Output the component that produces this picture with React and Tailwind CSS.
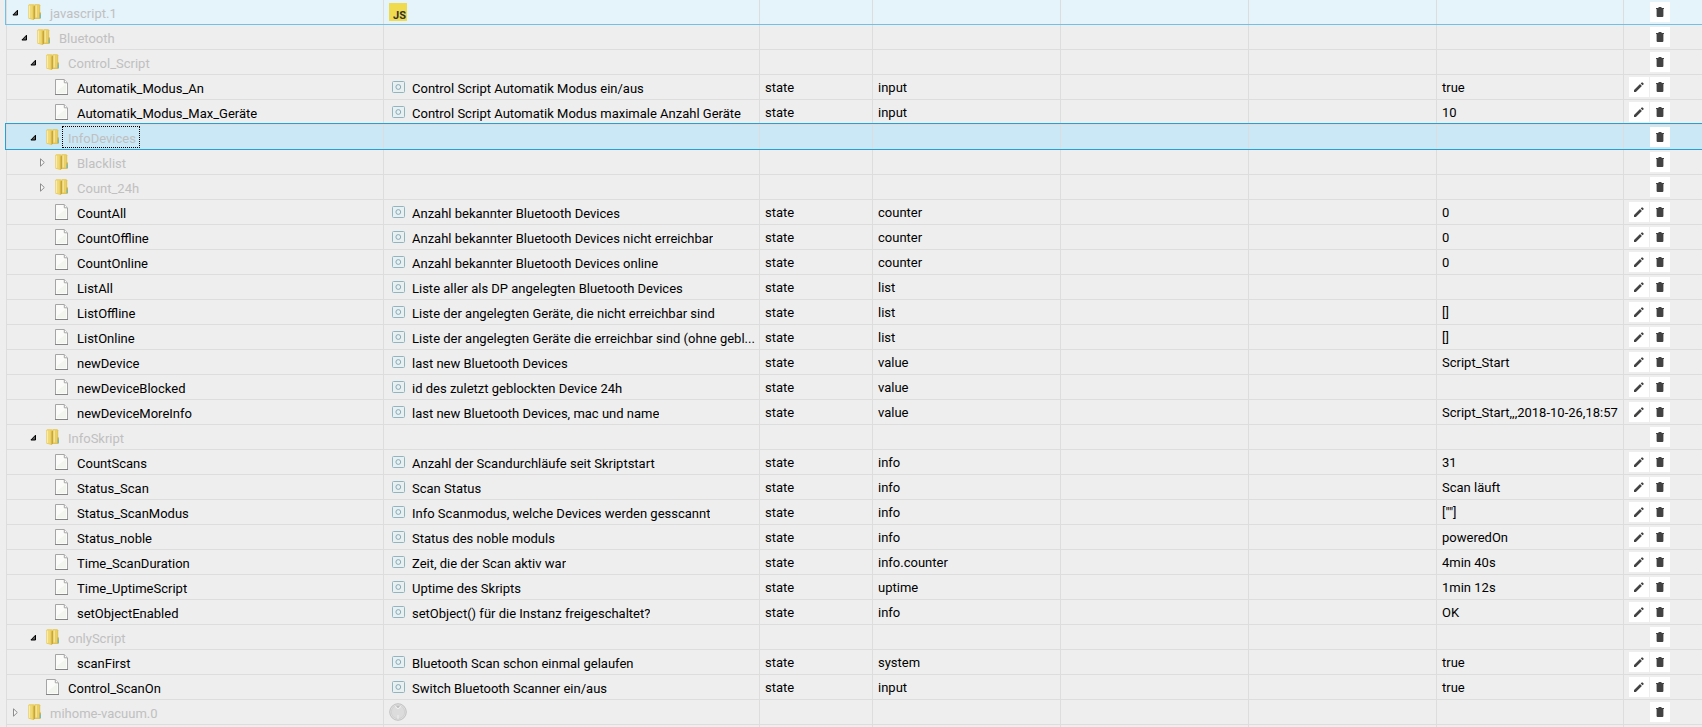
const LINE = 'border-[#dddddd]'

const indents = ['pl-[5px]', 'pl-[14px]', 'pl-[23px]', 'pl-[32px]']

const stateRow = (level, name, desc, role, value = '') => ({ level, name, desc, role, value })
const folder = (level, name, open = true, extra = {}) => ({ level, name, folder: true, open, ...extra })

const rows = [
  folder(0, 'javascript.1', true, { adapter: 'js', hover: true }),
  folder(1, 'Bluetooth'),
  folder(2, 'Control_Script'),
  stateRow(3, 'Automatik_Modus_An', 'Control Script Automatik Modus ein/aus', 'input', 'true'),
  stateRow(3, 'Automatik_Modus_Max_Geräte', 'Control Script Automatik Modus maximale Anzahl Geräte', 'input', '10'),
  folder(2, 'InfoDevices', true, { selected: true }),
  folder(3, 'Blacklist', false),
  folder(3, 'Count_24h', false),
  stateRow(3, 'CountAll', 'Anzahl bekannter Bluetooth Devices', 'counter', '0'),
  stateRow(3, 'CountOffline', 'Anzahl bekannter Bluetooth Devices nicht erreichbar', 'counter', '0'),
  stateRow(3, 'CountOnline', 'Anzahl bekannter Bluetooth Devices online', 'counter', '0'),
  stateRow(3, 'ListAll', 'Liste aller als DP angelegten Bluetooth Devices', 'list'),
  stateRow(3, 'ListOffline', 'Liste der angelegten Geräte, die nicht erreichbar sind', 'list', '[]'),
  stateRow(3, 'ListOnline', 'Liste der angelegten Geräte die erreichbar sind (ohne gebl...', 'list', '[]'),
  stateRow(3, 'newDevice', 'last new Bluetooth Devices', 'value', 'Script_Start'),
  stateRow(3, 'newDeviceBlocked', 'id des zuletzt geblockten Device 24h', 'value'),
  stateRow(3, 'newDeviceMoreInfo', 'last new Bluetooth Devices, mac und name', 'value', 'Script_Start,,,2018-10-26,18:57'),
  folder(2, 'InfoSkript'),
  stateRow(3, 'CountScans', 'Anzahl der Scandurchläufe seit Skriptstart', 'info', '31'),
  stateRow(3, 'Status_Scan', 'Scan Status', 'info', 'Scan läuft'),
  stateRow(3, 'Status_ScanModus', 'Info Scanmodus, welche Devices werden gesscannt', 'info', '[""]'),
  stateRow(3, 'Status_noble', 'Status des noble moduls', 'info', 'poweredOn'),
  stateRow(3, 'Time_ScanDuration', 'Zeit, die der Scan aktiv war', 'info.counter', '4min 40s'),
  stateRow(3, 'Time_UptimeScript', 'Uptime des Skripts', 'uptime', '1min 12s'),
  stateRow(3, 'setObjectEnabled', 'setObject() für die Instanz freigeschaltet?', 'info', 'OK'),
  folder(2, 'onlyScript'),
  stateRow(3, 'scanFirst', 'Bluetooth Scan schon einmal gelaufen', 'system', 'true'),
  stateRow(2, 'Control_ScanOn', 'Switch Bluetooth Scanner ein/aus', 'input', 'true'),
  folder(0, 'mihome-vacuum.0', false, { adapter: 'vacuum' }),
]

function Expander({ open }) {
  return (
    <svg width="8" height="10" viewBox="0 0 8 10">
      {open ? (
        <path d="M5.5 3.2v4.8H.9z" fill="#595959" stroke="#000" />
      ) : (
        <path d="M1.5 1.8v7.4L5.3 5.5z" fill="#f8f8f8" stroke="#8c8c8c" />
      )}
    </svg>
  )
}

function FolderIcon() {
  return (
    <svg width="13" height="16" viewBox="0 0 13 16" className="shrink-0">
      <path d="M6 1 7 .3h4.4l.8.9v13l-1 .8H6z" fill="#e2c452" />
      <path d="M7.4 1.2h1.8v12.4H7.4z" fill="#f5e392" />
      <path d="M9.2 1.2h2v12.4h-2z" fill="#ead06a" />
      <path d="M11.2 8.6H13v5.6l-.8.6h-1z" fill="#d3b34a" />
      <path d="M11.8 10.6h1V14h-1z" fill="#55c1e0" />
      <path d="M.3 1.2 1.2.3h4.4l1.2 1.3v13L5.4 16 .3 14.4z" fill="#e8cb58" />
      <path d="M.9 1.4h1.6v12.9L.9 13.7z" fill="#f9ecaa" />
      <path d="M2.5 1.2h2v13.5l-2-.5z" fill="#efd876" />
      <path d="M5.6 2.4 6.8 1.8v12.8L5.6 15.9z" fill="#bf9c35" />
    </svg>
  )
}

function FileIcon() {
  return (
    <svg width="13" height="16" viewBox="0 0 13 16" className="shrink-0">
      <path d="M.5.5h8.6l3.4 3.4v11.6H.5z" fill="#fbfcf9" stroke="#a5a5a5" />
      <path d="M2 12 11 5v9H2z" fill="#f2f5ed" />
      <path d="M9.3.8v3h3" fill="#fff" stroke="#a5a5a5" />
      <path d="M0 15.5h13" stroke="#858585" />
    </svg>
  )
}

function StateIcon() {
  return (
    <svg width="13" height="12" viewBox="0 0 13 12" className="shrink-0">
      <rect x=".5" y=".5" width="12" height="11" rx="1" fill="#e9f0f2" stroke="#93b4bf" />
      <circle cx="6.3" cy="6" r="2.4" fill="none" stroke="#86abb7" />
    </svg>
  )
}

function AdapterIcon({ kind }) {
  if (kind === 'js') {
    return (
      <span className="flex size-[18px] items-end justify-end bg-[#f0db4f] pr-px text-[11px] leading-[10px] font-bold text-[#323330]">
        JS
      </span>
    )
  }
  return (
    <svg width="18" height="18" viewBox="0 0 18 18">
      <circle cx="9" cy="9" r="8.3" fill="#dfdfdf" stroke="#c2c2c2" />
      <circle cx="9" cy="9" r="6.7" fill="#dcdcdc" stroke="#d2d2d2" />
      <path d="M5.8 3.2 9 6l3.2-2.8" fill="none" stroke="#f3f3f3" />
      <path d="M7.3 3.2h3.4L9 5z" fill="#b4b4b4" />
      <path d="M9 12v4" stroke="#f0f0f0" />
    </svg>
  )
}

function PencilIcon() {
  return (
    <svg width="10" height="10" viewBox="0 0 10 10" fill="#424242">
      <path d="M0 10V8.1L6 2.1 7.9 4l-6 6zM6.7 1.4 7.7.4q.4-.4.8 0l1.1 1.1q.4.4 0 .8l-1 1z" />
    </svg>
  )
}

function TrashIcon() {
  return (
    <svg width="8" height="10" viewBox="0 0 8 10" fill="#424242">
      <path d="M0 .9h2.2L2.8 0h2.4l.6.9H8V2H0zM.6 2h6.8v7q0 1-1 1H1.6q-1 0-1-1z" />
    </svg>
  )
}

function IconButton({ label, children }) {
  return (
    <button type="button" aria-label={label} className="flex size-5 items-center justify-center bg-white">
      {children}
    </button>
  )
}

function Cell({ children }) {
  return <td className={`h-[25px] truncate border-b border-l ${LINE} pt-0.5 pl-[5px]`}>{children}</td>
}

function Row({ row }) {
  return (
    <tr className={`relative ${row.hover ? 'bg-[#e5f3fb]' : ''} ${row.selected ? 'bg-[#cbe8f6]' : ''}`}>
      <td className={`h-[25px] border-b border-l ${LINE} ${indents[row.level]}`}>
        {/* frame over the whole row */}
        {row.hover && (
          <span className="pointer-events-none absolute inset-y-0 right-0 -left-px border-b border-l border-[#70c0e7]" />
        )}
        {row.selected && (
          <span className="pointer-events-none absolute -top-0.5 right-0 bottom-0 -left-px border-y border-l border-[#26a0da]" />
        )}
        <div className="flex h-6 items-center">
          <span className="flex w-4 shrink-0">
            {row.folder && (
              <button type="button" aria-label={row.name}>
                <Expander open={row.open} />
              </button>
            )}
          </span>
          {row.folder ? <FolderIcon /> : <FileIcon />}
          <span
            className={`ml-[3px] h-[22px] truncate border border-dotted pr-[3px] pl-[5px] leading-6 ${
              row.selected ? 'border-black' : 'border-transparent'
            } ${row.folder ? 'text-[#c0c0c0]' : 'text-black'}`}
          >
            {row.name}
          </span>
        </div>
      </td>
      <td className={`h-[25px] border-b border-l ${LINE} pl-[5px]`}>
        {row.adapter && <AdapterIcon kind={row.adapter} />}
        {row.desc && (
          <div className="flex h-6 items-center gap-[7px] pl-[3px]">
            <StateIcon />
            <span className="truncate pt-1">{row.desc}</span>
          </div>
        )}
      </td>
      <Cell>{row.desc && 'state'}</Cell>
      <Cell>{row.role}</Cell>
      <Cell />
      <Cell />
      <Cell>{row.value}</Cell>
      <td className={`h-[25px] border-b border-l ${LINE} pr-8`}>
        <div className="flex justify-end gap-px">
          {!row.folder && (
            <IconButton label="edit">
              <PencilIcon />
            </IconButton>
          )}
          <IconButton label="delete">
            <TrashIcon />
          </IconButton>
        </div>
      </td>
    </tr>
  )
}

export default function App() {
  return (
    <div className="overflow-hidden bg-[#eeeeee] pl-1.5 font-[Roboto,'Open_Sans',sans-serif] text-[13px] leading-5 text-black">
      <table className="w-full table-fixed border-separate border-spacing-0">
        <colgroup>
          <col className="w-[377px]" />
          <col />
          <col className="w-[113px]" />
          <col className="w-[188px]" />
          <col className="w-[188px]" />
          <col className="w-[188px]" />
          <col className="w-[187px]" />
          <col className="w-[79px]" />
        </colgroup>
        <tbody>
          {rows.map((row) => (
            <Row key={row.name} row={row} />
          ))}
          <tr>
            {[0, 1, 2, 3, 4, 5, 6, 7].map((i) => (
              <td key={i} className={`h-0.5 border-l ${LINE}`} />
            ))}
          </tr>
        </tbody>
      </table>
    </div>
  )
}
